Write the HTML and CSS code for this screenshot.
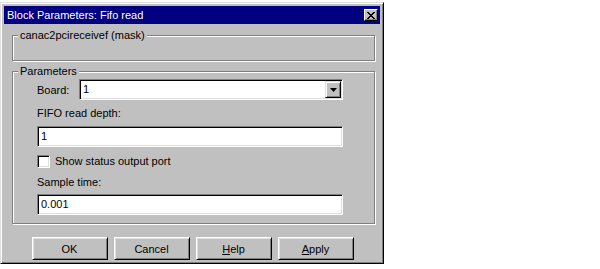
FILE: index.html
```html
<!DOCTYPE html>
<html>
<head>
<meta charset="utf-8">
<link rel="stylesheet" href="styles.css">
</head>
<body>
<div class="window">
  <div class="titlebar">
    <span class="title">Block Parameters: Fifo read</span>
    <button class="close" aria-label="Close"><svg width="8" height="7" viewBox="0 0 8 7"><path d="M0 0h2v1h1v1h2V1h1V0h2v1H7v1H6v1H5v1h1v1h1v1h1v1H6V6H5V5H3v1H2v1H0V6h1V5h1V4h1V3H2V2H1V1H0z" fill="#000"/></svg></button>
  </div>
  <div class="content">
    <div class="group mask">
      <div class="legend">canac2pcireceivef (mask)</div>
    </div>
    <div class="group params">
      <div class="legend params-legend">Parameters</div>
      <div class="board-row">
        <span class="board-label">Board:</span>
        <div class="select">
          <span class="select-value">1</span>
          <span class="drop"><svg width="7" height="4" viewBox="0 0 7 4"><path d="M0 0h7L3.5 4z" fill="#000"/></svg></span>
        </div>
      </div>
      <div class="lbl first">FIFO read depth:</div>
      <div class="field">1</div>
      <div class="check-row"><span class="box"></span><span>Show status output port</span></div>
      <div class="lbl second">Sample time:</div>
      <div class="field last">0.001</div>
    </div>
    <div class="buttons">
      <button class="btn">OK</button>
      <button class="btn">Cancel</button>
      <button class="btn"><u>H</u>elp</button>
      <button class="btn"><u>A</u>pply</button>
    </div>
  </div>
</div>
</body>
</html>
```
FILE: styles.css
```css
html, body {
  margin: 0;
  padding: 0;
  background: #ffffff;
}
body {
  font-family: "Liberation Sans", Arial, sans-serif;
  font-size: 11px;
  color: #000;
}
.window {
  box-sizing: border-box;
  width: 384px;
  height: 262px;
  margin-top: 2px;
  background: #c0c0c0;
  border: 1px solid;
  border-color: #dfdfdf #000 #000 #dfdfdf;
  box-shadow: inset 1px 1px #fff, inset -1px -1px #808080;
  padding: 3px;
  display: flex;
  flex-direction: column;
}
.titlebar {
  height: 18px;
  background: #000080;
  color: #fff;
  display: flex;
  align-items: center;
  justify-content: space-between;
  padding: 0 2px 0 3px;
}
.title {
  font-size: 11px;
  line-height: 13px;
}
.close {
  box-sizing: border-box;
  width: 14px;
  height: 12px;
  padding: 0;
  margin: 0;
  background: #c0c0c0;
  border: 1px solid;
  border-color: #fff #000 #000 #fff;
  box-shadow: inset -1px -1px #808080;
  display: flex;
  align-items: center;
  justify-content: center;
}
.close svg { display: block; }
.content {
  display: flex;
  flex-direction: column;
  padding: 0 5px 0 8px;
}
.group {
  box-sizing: border-box;
  border: 1px solid #808080;
  box-shadow: inset 1px 1px #fff, 1px 1px #fff;
}
.legend {
  width: max-content;
  margin: -7px 0 0 5px;
  padding: 0 2px;
  background: #c0c0c0;
  line-height: 13px;
}
.params-legend {
  margin-left: -19px;
}
.mask {
  margin-top: 11px;
  height: 26px;
}
.params {
  margin-top: 10px;
  padding: 0 31px 8px 24px;
}
.board-row {
  margin-top: 1px;
  display: flex;
  align-items: center;
  height: 21px;
}
.board-label {
  width: 42px;
}
.select {
  box-sizing: border-box;
  flex: 1;
  height: 21px;
  background: #fff;
  border: 1px solid;
  border-color: #808080 #fff #fff #808080;
  box-shadow: inset 1px 1px #000, inset -1px -1px #dfdfdf;
  padding: 1px 1px 1px 2px;
  display: flex;
  align-items: stretch;
}
.select-value {
  flex: 1;
  line-height: 17px;
  padding-left: 1px;
}
.drop {
  box-sizing: border-box;
  width: 16px;
  background: #c0c0c0;
  border: 1px solid;
  border-color: #dfdfdf #000 #000 #dfdfdf;
  box-shadow: inset 1px 1px #fff, inset -1px -1px #808080;
  display: flex;
  align-items: center;
  justify-content: center;
}
.drop svg { display: block; }
.lbl {
  line-height: 13px;
}
.lbl.first { margin-top: 7px; }
.lbl.second { margin-top: 8px; }
.field {
  box-sizing: border-box;
  height: 21px;
  margin-top: 6px;
  background: #fff;
  border: 1px solid;
  border-color: #808080 #fff #fff #808080;
  box-shadow: inset 1px 1px #000, inset -1px -1px #dfdfdf;
  padding: 0 3px;
  line-height: 19px;
}
.field.last { margin-top: 5px; }
.check-row {
  margin-top: 8px;
  display: flex;
  align-items: center;
  gap: 5px;
  height: 13px;
  line-height: 13px;
}
.box {
  box-sizing: border-box;
  width: 13px;
  height: 13px;
  background: #fff;
  border: 1px solid;
  border-color: #808080 #fff #fff #808080;
  box-shadow: inset 1px 1px #000, inset -1px -1px #dfdfdf;
}
.buttons {
  margin-top: 13px;
  display: flex;
  justify-content: center;
  gap: 6px;
  padding-right: 2px;
}
.btn {
  box-sizing: border-box;
  width: 76px;
  height: 23px;
  margin: 0;
  padding: 0;
  font: inherit;
  color: #000;
  background: #c0c0c0;
  border: 1px solid;
  border-color: #fff #000 #000 #fff;
  box-shadow: inset 1px 1px #dfdfdf, inset -1px -1px #808080;
}
```
